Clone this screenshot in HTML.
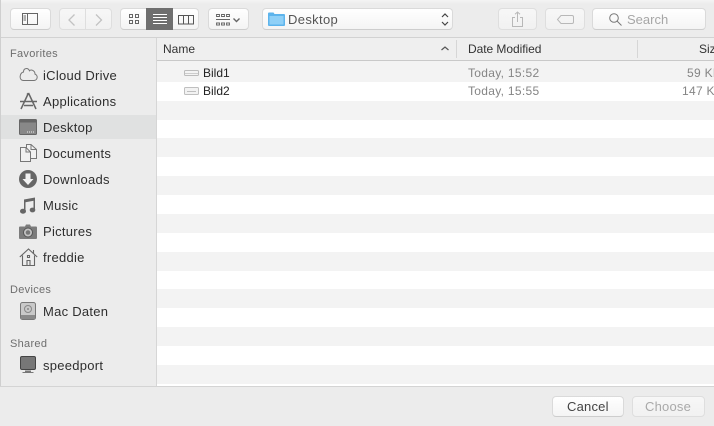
<!DOCTYPE html>
<html><head><meta charset="utf-8">
<style>
html,body{margin:0;padding:0;width:714px;height:426px;overflow:hidden;background:#ececec;font-family:"Liberation Sans",sans-serif;}
.a{position:absolute}
#top{left:0;top:0;width:714px;height:37px;background:linear-gradient(#f4f4f4 0,#ececec 4px);}
#tl{left:0;top:37px;width:714px;height:1px;background:#d2d2d2}
.btn{position:absolute;box-sizing:border-box;height:22px;top:8px;background:linear-gradient(#fff,#f4f4f4);border:1px solid #dadada;border-bottom-color:#cdcdcd;border-radius:4px}
.dim{background:linear-gradient(#f7f7f7,#f1f1f1);border-color:#dedede}
.side{left:1px;top:38px;width:155px;height:348px;background:#ececec}
.sl{left:156px;top:38px;width:1px;height:348px;background:#d6d6d6}
.t{position:absolute;white-space:nowrap;font-size:13px;line-height:16px;color:#2e2e2e;letter-spacing:.27px}
.h{position:absolute;white-space:nowrap;font-size:11px;line-height:14px;color:#6e6e6e;left:10px;letter-spacing:.3px;font-weight:normal}
.c{position:absolute;white-space:nowrap;font-size:12px;line-height:14px;color:#333}
.g{color:#858585;letter-spacing:.3px}
.r{left:157px;width:557px;position:absolute;background:#fff}
svg{position:absolute;overflow:visible}
</style></head><body>
<div class="a" id="top"></div><div class="a" id="tl"></div>

<div class="btn" style="left:10px;width:41px"></div>
<svg style="left:22px;top:13px" width="16" height="12" fill="none" stroke="#666"><rect x=".5" y=".5" width="15" height="11"/><path d="M5.500 .5V11.500M1.500 3h2.500M1.500 5h2.500M1.500 7h2.500" stroke-width="1"/></svg>

<div class="btn dim" style="left:59px;width:27px;border-radius:4px 0 0 4px"></div>
<div class="btn dim" style="left:85px;width:27px;border-radius:0 4px 4px 0"></div>
<svg style="left:68px;top:14px" width="8" height="12" fill="none" stroke="#c2c2c2" stroke-width="1.300"><path d="M6.500 .5L1 6l5.500 5.500"/></svg>
<svg style="left:95px;top:14px" width="8" height="12" fill="none" stroke="#c2c2c2" stroke-width="1.300"><path d="M1 .5L6.500 6 1 11.500"/></svg>

<div class="btn" style="left:120px;width:79px"></div>
<div class="a" style="left:146px;top:8px;width:27px;height:22px;background:#6f6f6f"></div>
<svg style="left:129px;top:14px" width="10" height="10" fill="none" stroke="#666"><rect x=".5" y=".5" width="3" height="3"/><rect x="6.500" y=".5" width="3" height="3"/><rect x=".5" y="6.500" width="3" height="3"/><rect x="6.500" y="6.500" width="3" height="3"/></svg>
<svg style="left:153px;top:14px" width="14" height="10" fill="none" stroke="#fff"><path d="M0 .5H14M0 3.500H14M0 6.500H14M0 9.500H14"/></svg>
<svg style="left:178px;top:15px" width="16" height="9" fill="none" stroke="#555"><rect x=".5" y=".5" width="15" height="8.500"/><path d="M5.500 .5V9M10.500 .5V9"/></svg>

<div class="btn" style="left:208px;width:41px"></div>
<svg style="left:216px;top:14px" width="25" height="12" fill="none" stroke="#666"><path d="M.5 .5h3v2h-3zM5.500 .5h3v2h-3zM10.500 .5h3v2h-3zM.5 9h3v2h-3zM5.500 9h3v2h-3zM10.500 9h3v2h-3z" stroke-width=".9"/><path d="M0 5.500H14" stroke-width="1"/><path d="M17.500 4.500l3 3 3-3" stroke-width="1.400"/></svg>

<div class="btn" style="left:262px;width:191px"></div>
<svg style="left:268px;top:12px" width="17" height="14"><path d="M0 1.500q0-1 1-1h4.500l1 1.500H16a1 1 0 0 1 1 1V13a1 1 0 0 1-1 1H1a1 1 0 0 1-1-1z" fill="#5db4ec"/><rect x="1.500" y="4" width="14" height="8.500" fill="#8fd0f7"/></svg>
<div class="t" style="left:288px;top:12px;color:#555;letter-spacing:.35px">Desktop</div>
<svg style="left:441px;top:13px" width="8" height="13" fill="none" stroke="#444" stroke-width="1.200"><path d="M1 4l3-3 3 3M1 9l3 3 3-3"/></svg>

<div class="btn dim" style="left:498px;width:39px"></div>
<svg style="left:512px;top:11px" width="11" height="16" fill="none" stroke="#b8b8b8"><path d="M3 6.500H.5V15.500H10.500V6.500H8M5.500 11V1M3 3.300L5.500 1 8 3.300"/></svg>
<div class="btn dim" style="left:545px;width:40px"></div>
<svg style="left:557px;top:15px" width="17" height="9" fill="none" stroke="#b8b8b8"><path d="M4 .5H15a1.500 1.500 0 0 1 1.500 1.500v5a1.500 1.500 0 0 1-1.500 1.500H4L.5 4.500z"/></svg>
<div class="btn" style="left:592px;width:114px"></div>
<svg style="left:609px;top:13px" width="13" height="13" fill="none" stroke="#777" stroke-width="1"><circle cx="5" cy="5" r="4.300"/><path d="M8 8l4.500 4.500"/></svg>
<div class="t" style="left:627px;top:12px;color:#a6a6a6;letter-spacing:0">Search</div>

<div class="a" style="left:157px;top:38px;width:557px;height:22px;background:#efefef"></div>
<div class="a" style="left:157px;top:60px;width:557px;height:1px;background:#c9c9c9"></div>
<div class="a" style="left:456px;top:40px;width:1px;height:18px;background:#d6d6d6"></div>
<div class="a" style="left:637px;top:40px;width:1px;height:18px;background:#d6d6d6"></div>
<div class="c" style="left:163px;top:42px">Name</div>
<svg style="left:441px;top:46px" width="8" height="5" fill="none" stroke="#555" stroke-width="1.200"><path d="M.5 4L4 1l3.500 3"/></svg>
<div class="c" style="left:468px;top:42px;letter-spacing:-.05px">Date Modified</div>
<div class="c" style="left:699px;top:42px">Size</div>

<div class="a" style="left:157px;top:61px;width:557px;height:325px;background:#f3f3f3"></div>
<div class="r" style="top:82px;height:19px"></div>
<div class="r" style="top:120px;height:18px"></div>
<div class="r" style="top:157px;height:19px"></div>
<div class="r" style="top:195px;height:19px"></div>
<div class="r" style="top:233px;height:19px"></div>
<div class="r" style="top:271px;height:18px"></div>
<div class="r" style="top:308px;height:19px"></div>
<div class="r" style="top:346px;height:19px"></div>
<div class="r" style="top:384px;height:2px"></div>

<svg style="left:184px;top:70px" width="15" height="6"><rect x=".5" y=".5" width="14" height="5" rx="1" fill="#f4f4f4" stroke="#bcbcbc"/><path d="M1 3.500H14" stroke="#cdcdcd"/></svg>
<div class="c" style="left:203px;top:66px;color:#222">Bild1</div>
<div class="c g" style="left:468px;top:66px">Today, 15:52</div>
<div class="c g" style="left:687px;top:66px">59 KB</div>
<svg style="left:184px;top:87px" width="15" height="8"><rect x=".5" y=".5" width="14" height="7" rx="1" fill="#f2f2f2" stroke="#bfbfbf"/><path d="M3 4.500H12" stroke="#bfbfbf"/></svg>
<div class="c" style="left:203px;top:84px;color:#222">Bild2</div>
<div class="c g" style="left:468px;top:84px">Today, 15:55</div>
<div class="c g" style="left:682px;top:84px">147 KB</div>

<div class="a side"></div><div class="a sl"></div>
<div class="a" style="left:1px;top:115px;width:155px;height:24px;background:#e0e1e1"></div>
<div class="h" style="top:47px">Favorites</div>

<svg style="left:19px;top:67px" width="19" height="14" fill="none" stroke="#757575"><path d="M4.500 13.500H15a3.300 3.300 0 0 0 1-6.400C16 3.500 12 2 10.500 3.800 9 .5 4.500 .8 4.500 5 .5 5.500-.5 13.500 4.500 13.500z"/></svg>
<div class="t" style="left:43px;top:68px">iCloud Drive</div>

<svg style="left:19px;top:92px" width="19" height="18" fill="none" stroke="#666" stroke-width="1.500"><path d="M9.500 1L2 17M9.500 1L17 17M8 1.500l1.500 1.500M1 9.500H18M5 13.500H14"/></svg>
<div class="t" style="left:43px;top:94px">Applications</div>

<svg style="left:19px;top:119px" width="18" height="16"><rect x=".5" y=".5" width="17" height="15" rx="1" fill="#888" stroke="#666"/><rect x="1" y="1" width="16" height="2.500" fill="#666"/><path d="M8 13h1M10 13h1M12 13h1M14 13h1" stroke="#eee"/></svg>
<div class="t" style="left:43px;top:120px">Desktop</div>

<svg style="left:20px;top:144px" width="17" height="18" fill="#f1f1f1" stroke="#777"><path d="M6.500 .5H11l5.500 5V14.500H6.500z"/><path d="M11 .5V5.500H16.500" fill="none"/><path d="M.5 3.500H6l4.500 4.500V17.500H.5z"/><path d="M6 3.500V8H10.500" fill="none"/></svg>
<div class="t" style="left:43px;top:146px">Documents</div>

<svg style="left:19px;top:170px" width="18" height="18"><circle cx="9" cy="9" r="9" fill="#666"/><path d="M6.500 3.500h5V9h3L9 15 3.500 9h3z" fill="#f2f2f2"/></svg>
<div class="t" style="left:43px;top:172px">Downloads</div>

<svg style="left:20px;top:197px" width="16" height="17" fill="#666"><path d="M4 2.500L15 .5V3.500L5.500 5.300V14H4z"/><path d="M13.500 2H15V13H13.500z"/><ellipse cx="3" cy="14.200" rx="3" ry="2.500"/><ellipse cx="12.500" cy="13" rx="2.800" ry="2.400"/></svg>
<div class="t" style="left:43px;top:198px">Music</div>

<svg style="left:19px;top:224px" width="18" height="15"><path d="M1 2.500H6L7 .5H11L12 2.500H17a1 1 0 0 1 1 1V14a1 1 0 0 1-1 1H1a1 1 0 0 1-1-1V3.500a1 1 0 0 1 1-1z" fill="#7c7c7c"/><circle cx="9" cy="8.500" r="4.500" fill="#c4c4c4" stroke="#555"/><circle cx="9" cy="8.500" r="2.300" fill="#777"/></svg>
<div class="t" style="left:43px;top:224px">Pictures</div>

<svg style="left:19px;top:248px" width="19" height="18" fill="none" stroke="#666" stroke-width="1.100"><path d="M.8 9L9.500 1 18.200 9M14.500 2V5.500M3.500 7.500V17.500H15.500V7.500"/><path d="M8 17.500V12.500H11V17.500M8.500 7.500h2v2h-2z"/></svg>
<div class="t" style="left:43px;top:250px">freddie</div>

<div class="h" style="top:283px">Devices</div>
<svg style="left:20px;top:302px" width="16" height="18"><rect x=".5" y=".5" width="15" height="17" rx="2" fill="#c9c9c9" stroke="#777"/><rect x="1" y="13" width="14" height="4" fill="#8a8a8a"/><circle cx="8" cy="7" r="3.500" fill="none" stroke="#888"/><circle cx="8" cy="7" r="1" fill="#888"/></svg>
<div class="t" style="left:43px;top:304px">Mac Daten</div>

<div class="h" style="top:337px">Shared</div>
<svg style="left:20px;top:356px" width="16" height="18"><rect x=".5" y=".5" width="15" height="13" rx="1.500" fill="#777" stroke="#444"/><path d="M5 14.500h6v1.500h2.500v1H2.500v-1H5z" fill="#777"/></svg>
<div class="t" style="left:43px;top:358px">speedport</div>

<div class="a" style="left:0;top:0;width:1px;height:426px;background:#cfcfcf"></div>
<div class="a" style="left:0;top:386px;width:714px;height:1px;background:#d4d4d4"></div>
<div class="a" style="left:0;top:387px;width:714px;height:39px;background:#ececec"></div>
<div class="btn" style="left:552px;top:396px;width:72px;height:21px"></div>
<div class="t" style="left:567px;top:399px;color:#444;letter-spacing:.2px">Cancel</div>
<div class="btn dim" style="left:632px;top:396px;width:73px;height:21px"></div>
<div class="t" style="left:645px;top:399px;color:#a9a9a9;letter-spacing:.2px">Choose</div>
</body></html>
